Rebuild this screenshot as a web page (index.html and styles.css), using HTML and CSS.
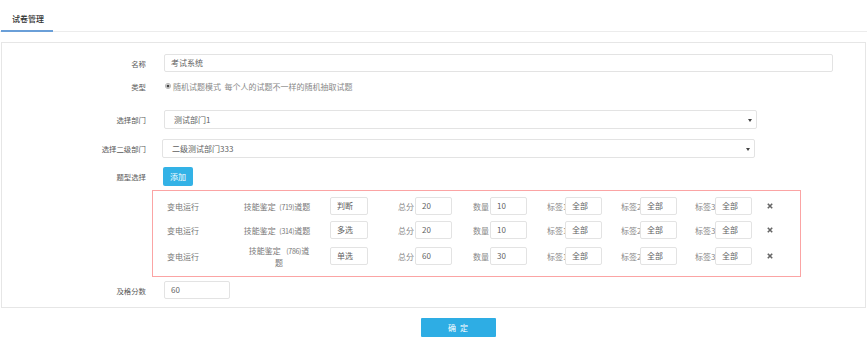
FILE: index.html
```html
<!DOCTYPE html>
<html lang="zh-CN">
<head>
<meta charset="utf-8">
<title>试卷管理</title>
<link rel="stylesheet" href="styles.css">
</head>
<body>
<div class="tabs">
  <div class="tab active">试卷管理</div>
</div>

<div class="card">
  <div class="row r-name">
    <div class="lbl">名称</div>
    <div class="input w-name">考试系统</div>
  </div>
  <div class="row r-type">
    <div class="lbl">类型</div>
    <div class="radio">
      <svg width="6" height="6" viewBox="0 0 6 6"><circle cx="3" cy="3" r="2.6" fill="#fff" stroke="#999" stroke-width="0.7"/><circle cx="3" cy="3" r="1.5" fill="#444"/></svg>
      <span>随机试题模式&nbsp; 每个人的试题不一样的随机抽取试题</span>
    </div>
  </div>
  <div class="row r-sel1">
    <div class="lbl">选择部门</div>
    <div class="input select w-sel">测试部门1</div>
  </div>
  <div class="row r-sel2">
    <div class="lbl">选择二级部门</div>
    <div class="input select w-sel shift">二级测试部门333</div>
  </div>
  <div class="row r-add">
    <div class="lbl">题型选择</div>
    <div class="btn-add">添加</div>
  </div>

  <div class="qbox">
    <div class="qrow">
      <div class="c-name">变电运行</div>
      <div class="c-q">技能鉴定&nbsp; <span class="num">(719)</span>道题</div>
      <div class="input sm c-type">判断</div>
      <div class="grp g1"><span class="gl">总分</span><div class="input sm">20</div></div>
      <div class="grp g2"><span class="gl">数量</span><div class="input sm">10</div></div>
      <div class="grp g3"><span class="gl">标签1</span><div class="input sm">全部</div></div>
      <div class="grp g4"><span class="gl">标签2</span><div class="input sm">全部</div></div>
      <div class="grp g5"><span class="gl">标签3</span><div class="input sm">全部</div></div>
      <svg class="del" width="6" height="6" viewBox="0 0 6 6"><path d="M0.8 0.8L5.2 5.2M5.2 0.8L0.8 5.2" stroke="#666" stroke-width="1.6"/></svg>
    </div>
    <div class="qrow">
      <div class="c-name">变电运行</div>
      <div class="c-q">技能鉴定&nbsp; <span class="num">(314)</span>道题</div>
      <div class="input sm c-type">多选</div>
      <div class="grp g1"><span class="gl">总分</span><div class="input sm">20</div></div>
      <div class="grp g2"><span class="gl">数量</span><div class="input sm">10</div></div>
      <div class="grp g3"><span class="gl">标签1</span><div class="input sm">全部</div></div>
      <div class="grp g4"><span class="gl">标签2</span><div class="input sm">全部</div></div>
      <div class="grp g5"><span class="gl">标签3</span><div class="input sm">全部</div></div>
      <svg class="del" width="6" height="6" viewBox="0 0 6 6"><path d="M0.8 0.8L5.2 5.2M5.2 0.8L0.8 5.2" stroke="#666" stroke-width="1.6"/></svg>
    </div>
    <div class="qrow tall">
      <div class="c-name">变电运行</div>
      <div class="c-q wrap">技能鉴定&nbsp;&nbsp; <span class="num">(786)</span>道<br>题</div>
      <div class="input sm c-type">单选</div>
      <div class="grp g1"><span class="gl">总分</span><div class="input sm">60</div></div>
      <div class="grp g2"><span class="gl">数量</span><div class="input sm">30</div></div>
      <div class="grp g3"><span class="gl">标签1</span><div class="input sm">全部</div></div>
      <div class="grp g4"><span class="gl">标签2</span><div class="input sm">全部</div></div>
      <div class="grp g5"><span class="gl">标签3</span><div class="input sm">全部</div></div>
      <svg class="del" width="6" height="6" viewBox="0 0 6 6"><path d="M0.8 0.8L5.2 5.2M5.2 0.8L0.8 5.2" stroke="#666" stroke-width="1.6"/></svg>
    </div>
  </div>

  <div class="row r-pass">
    <div class="lbl">及格分数</div>
    <div class="input w-pass">60</div>
  </div>
</div>

<div class="actions">
  <div class="btn-ok">确 定</div>
</div>
</body>
</html>
```

FILE: styles.css
```css
* { box-sizing: border-box; }
html, body { margin: 0; padding: 0; background: #fff; }
body {
  font-family: "Noto Sans CJK SC", "Noto Sans", sans-serif;
  font-size: 8px;
  color: #666;
  width: 867px;
  height: 357px;
  overflow: hidden;
}

.tabs {
  height: 32px;
  border-bottom: 1px solid #ececec;
  display: flex;
}
.tab {
  margin-left: 1px;
  width: 52px;
  padding-left: 11px;
  padding-top: 13px;
  height: 32px;
  line-height: 12px;
  color: #333;
  font-weight: 500;
  border-bottom: 2px solid #6a9fd8;
}

.card {
  margin: 10px 1px 0 1px;
  border: 1px solid #e6e6e6;
  padding: 11px 0 8px 0;
}

.row {
  display: flex;
  align-items: center;
}
.lbl {
  width: 144px;
  margin-right: 18px;
  text-align: right;
  color: #5a5a5a;
  font-size: 7.4px;
}
.r-type { margin-top: 5px; height: 18px; }
.r-sel1 { margin-top: 15px; }
.r-sel2 { margin-top: 10px; }
.r-add { margin-top: 9px; }
.r-pass { margin-top: 4px; }

.input {
  height: 18px;
  line-height: 16px;
  border: 1px solid #e3e3e3;
  border-radius: 2px;
  padding-left: 6px;
  color: #5f5f5f;
  background: #fff;
  white-space: nowrap;
}
.w-name { width: 669px; }
.w-pass { width: 66px; }
.w-sel { width: 593px; height: 19px; line-height: 17px; padding-left: 9px; }
.shift { margin-left: -2px; }
.select { position: relative; }
.select::after {
  content: "";
  position: absolute;
  right: 4px;
  top: 8px;
  border-left: 2px solid transparent;
  border-right: 2px solid transparent;
  border-top: 3px solid #444;
}

.radio {
  display: flex;
  align-items: center;
  gap: 2px;
  color: #888;
  margin-left: 1px;
}

.btn-add {
  margin-left: -1px;
  width: 30px;
  height: 19px;
  line-height: 19px;
  text-align: center;
  background: #33b2e6;
  color: #fff;
  border-radius: 2px;
}

.qbox {
  margin: 4px 0 0 150px;
  width: 649px;
  border: 1px solid #fba4a4;
  padding: 6px 0 9px 0;
  display: flex;
  flex-direction: column;
  gap: 6px;
}
.qrow {
  display: flex;
  align-items: center;
  height: 18px;
  color: #777;
}
.qrow.tall { height: 22px; }
.c-name { width: 84px; padding-left: 14px; }
.c-q {
  width: 80px;
  text-align: center;
  white-space: nowrap;
}
.num { font-size: 7px; letter-spacing: -0.3px; }
.c-q.wrap { line-height: 11px; white-space: normal; padding-left: 4px; }
.input.sm { width: 37px; }
.c-type { margin-left: 13px; width: 38px !important; }
.grp {
  display: flex;
  align-items: center;
}
.g1 { margin-left: 30px; width: 75px; }
.g2, .g3, .g4 { width: 74px; }
.g5 { width: 72px; }
.gl { white-space: nowrap; color: #888; }
.g1 .gl { width: 17px; }
.g2 .gl { width: 17px; }
.g3 .gl { width: 18px; }
.g4 .gl { width: 19px; }
.g5 .gl { width: 20px; }
.gl + .input { position: relative; }
.del { display: block; }

.actions {
  padding: 10px 0 0 421px;
}
.btn-ok {
  width: 75px;
  height: 19px;
  line-height: 19px;
  text-align: center;
  background: #2eade4;
  color: #fff;
  border-radius: 1px;
  letter-spacing: 1px;
}
```
